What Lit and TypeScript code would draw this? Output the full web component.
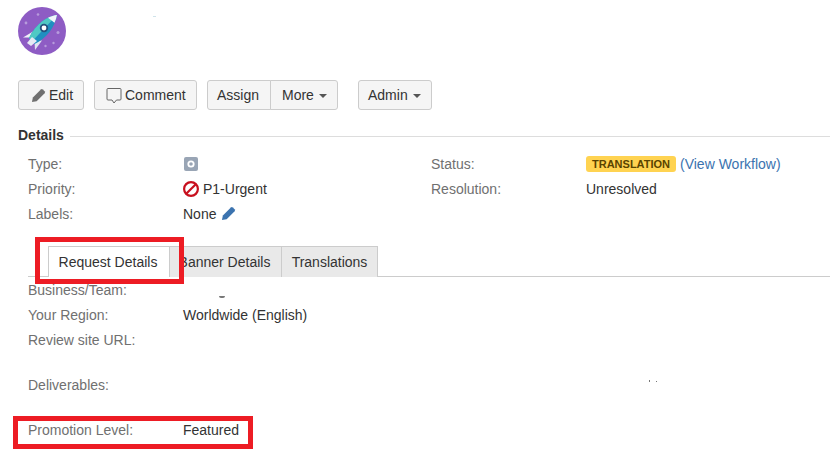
import { LitElement, html, css } from "lit";
import { customElement } from "lit/decorators.js";

const pencil = (cls: string) => html`<svg class=${cls} viewBox="0 0 16 16"><path d="M1 15l1-5L10.500 1.500a1.500 1.500 0 0 1 2.100 0l1.900 1.900a1.500 1.500 0 0 1 0 2.100L6 14z" fill="currentColor"/></svg>`;

@customElement("app-root")
export class AppRoot extends LitElement {
  static styles = css`
    :host { display: block; position: relative; width: 830px; height: 458px; overflow: hidden; background: #fff; color: #333; font: 14px/20px "Liberation Sans", Arial, sans-serif; }
    .page { display: flex; flex-direction: column; padding: 7px 0 0 18px; }
    .avatar { width: 48px; height: 48px; display: block; }
    .toolbar { display: flex; margin-top: 25px; height: 30px; }
    .btn { box-sizing: border-box; height: 30px; display: flex; align-items: center; background: #f5f5f5; border: 1px solid #ccc; border-radius: 3px; color: #333; padding: 0 9px; white-space: nowrap; }
    .edit { width: 66px; margin-right: 10px; padding: 0 0 0 12px; }
    .comment { width: 103px; margin-right: 10px; padding: 0 0 0 11px; }
    .assign { width: 64px; border-radius: 3px 0 0 3px; }
    .more { width: 68px; margin-left: -1px; border-radius: 0 3px 3px 0; padding-left: 11px; margin-right: 20px; }
    .admin { width: 74px; }
    .caret { width: 0; height: 0; border-left: 4px solid transparent; border-right: 4px solid transparent; border-top: 4px solid #555; margin-left: 5px; margin-top: 1px; }
    .ico-edit { width: 15px; height: 15px; color: #707070; margin-right: 3px; }
    .ico-comment { width: 16px; height: 17px; margin-right: 3px; }
    .heading { display: flex; align-items: center; margin-top: 15px; height: 20px; }
    .heading b { font-weight: 700; color: #333; }
    .heading i { flex: 1; height: 1px; background: #ddd; margin-left: 6px; margin-top: 2px; }
    .details { display: grid; grid-template-columns: 155px 248px 155px 1fr; grid-auto-rows: 25px; margin: 6px 0 0 10px; }
    .cell { display: flex; align-items: center; white-space: nowrap; }
    .label { color: #707070; }
    .lozenge { background: #ffd351; color: #594300; font-size: 11px; font-weight: 700; line-height: 16px; height: 16px; padding: 0 6px; border-radius: 3px; margin-right: 4px; }
    a { color: #3b73af; text-decoration: none; }
    .type { width: 14px; height: 14px; margin: 0 0 0 1px; }
    .prio { width: 16px; height: 16px; margin-right: 4px; }
    .pen { width: 15px; height: 15px; margin-left: 5px; color: #3b73af; }
    .tabs { display: flex; height: 31px; box-sizing: border-box; margin: 20px 0 0 10px; padding-left: 20px; border-bottom: 1px solid #ccc; }
    .tab { box-sizing: border-box; height: 31px; padding: 5px 2px 0 0; text-align: center; background: #e9e9e9; border: 1px solid #ccc; border-bottom: 0; border-left: 0; color: #333; white-space: nowrap; }
    .tab.first { width: 122px; background: #fff; border-left: 1px solid #ccc; }
    .tab.second { width: 112px; }
    .tab.third { width: 96px; padding-right: 0; }
    .fields { display: grid; grid-template-columns: 155px 1fr; grid-template-rows: 25px 25px 25px 45px 45px; margin: 0 0 0 10px; }
    .tall { align-items: flex-end; padding-bottom: 2px; box-sizing: border-box; }
    .mark { position: absolute; border: 5px solid #ed1c24; box-sizing: border-box; }
    .m1 { left: 35px; top: 237px; width: 149px; height: 47px; }
    .m2 { left: 13px; top: 416px; width: 240px; height: 33px; }
    .speck { position: absolute; background: #777; }
    .s1 { left: 219px; top: 296px; width: 6px; height: 2px; border-radius: 0 0 3px 3px; }
    .s2 { left: 649px; top: 380px; width: 1px; height: 2px; }
    .s3 { left: 656px; top: 381px; width: 1px; height: 1px; }
    .s4 { left: 153px; top: 16px; width: 3px; height: 1px; background: #cfe3ea; }
  `;

  render() {
    return html`
      <div class="page">
        <svg class="avatar" viewBox="0 0 48 48">
          <circle cx="24" cy="24" r="24" fill="#8e5cc4"/>
          <g fill="#b79bdc"><circle cx="20" cy="7.500" r="1.300"/><circle cx="8" cy="16" r="1.400"/><circle cx="40" cy="25.500" r="1.500"/><circle cx="35.500" cy="36" r="1.200"/><circle cx="27.500" cy="39" r="1.200"/></g>
          <path d="M5 30.500l10-6 2 6z" fill="#eef0f7"/>
          <path d="M17 43l-.5-9 7.500-.5z" fill="#dfe4f0"/>
          <path d="M39 8C30 9 18 16 11 31l5.500 6C28 32 37 20 39 8z" fill="#1f8fc0"/>
          <path d="M39 8C30 9 18 16 11 31l3 3.500z" fill="#4fc9c4"/>
          <path d="M39 8c-3 .3-6 1.300-9 2.800l6.500 5c1.200-2.500 2-5.200 2.500-7.800z" fill="#f2f5fa"/>
          <path d="M9 36l5-6 5 4-6 5z" fill="#e6e9f4"/>
          <circle cx="26" cy="21" r="4.200" fill="#24527e"/><circle cx="26" cy="21" r="2.400" fill="#fff"/>
        </svg>

        <div class="toolbar">
          <div class="btn edit">${pencil("ico-edit")}Edit</div>
          <div class="btn comment"><svg class="ico-comment" viewBox="0 0 16 17" fill="none" stroke="#666" stroke-width="1"><path d="M2 1.500h12a1 1 0 0 1 1 1v9.500a1 1 0 0 1-1 1h-3.500l-2.500 3-2-3H2a1 1 0 0 1-1-1V2.500a1 1 0 0 1 1-1z"/></svg>Comment</div>
          <div class="btn assign">Assign</div>
          <div class="btn more">More<span class="caret"></span></div>
          <div class="btn admin">Admin<span class="caret"></span></div>
        </div>

        <div class="heading"><b>Details</b><i></i></div>

        <div class="details">
          <div class="cell label">Type:</div>
          <div class="cell"><svg class="type" viewBox="0 0 14 14"><rect width="14" height="14" rx="2" fill="#99a5b5"/><circle cx="7" cy="7" r="2.700" fill="none" stroke="#fff" stroke-width="1.800"/></svg></div>
          <div class="cell label">Status:</div>
          <div class="cell"><span class="lozenge">TRANSLATION</span><a>(View Workflow)</a></div>
          <div class="cell label">Priority:</div>
          <div class="cell"><svg class="prio" viewBox="0 0 16 16" fill="none" stroke="#c8101e" stroke-width="2.200"><circle cx="8" cy="8" r="6.900"/><path d="M3.200 12.800L12.800 3.200"/></svg>P1-Urgent</div>
          <div class="cell label">Resolution:</div>
          <div class="cell">Unresolved</div>
          <div class="cell label">Labels:</div>
          <div class="cell">None${pencil("pen")}</div>
        </div>

        <div class="tabs">
          <div class="tab first">Request Details</div>
          <div class="tab second">Banner Details</div>
          <div class="tab third">Translations</div>
        </div>

        <div class="fields">
          <div class="cell label">Business/Team:</div><div class="cell"></div>
          <div class="cell label">Your Region:</div><div class="cell">Worldwide (English)</div>
          <div class="cell label">Review site URL:</div><div class="cell"></div>
          <div class="cell label tall">Deliverables:</div><div class="cell tall"></div>
          <div class="cell label tall">Promotion Level:</div><div class="cell tall">Featured</div>
        </div>
      </div>
      <div class="mark m1"></div>
      <div class="mark m2"></div>
      <div class="speck s1"></div>
      <div class="speck s2"></div>
      <div class="speck s3"></div>
      <div class="speck s4"></div>
    `;
  }
}
